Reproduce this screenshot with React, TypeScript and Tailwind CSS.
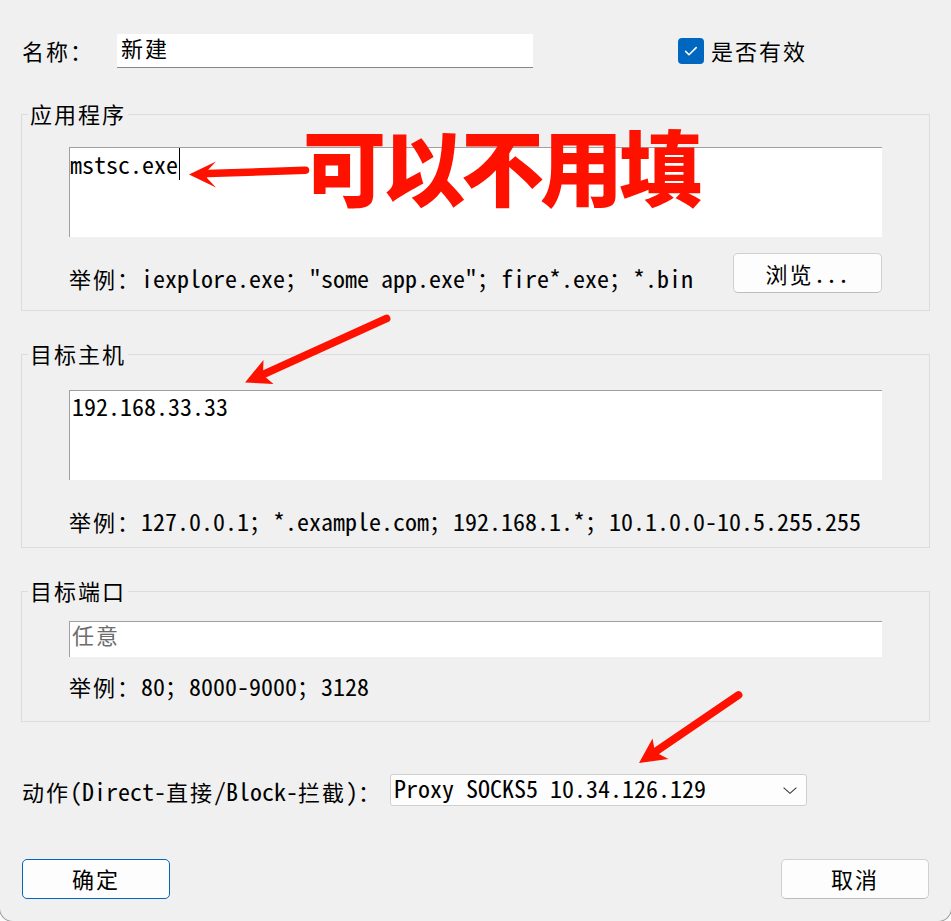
import React from "react";

function L({ children }: { children: React.ReactNode }) {
  return (
    <span className="[font-family:'Noto_Sans_Mono_CJK_SC','Liberation_Mono',monospace] text-[24px] tracking-normal">
      {children}
    </span>
  );
}

function Legend({ children }: { children: React.ReactNode }) {
  return (
    <legend className="ml-[6px] px-[2px] leading-[22px] h-[25px]">{children}</legend>
  );
}

export default function App() {
  return (
    <div className="relative w-[951px] h-[921px] overflow-hidden bg-[#fafafa] [font-family:'Noto_Sans_CJK_SC',sans-serif] text-[22px] tracking-[2px] leading-[24px] text-black">
      <div className="-ml-px w-[953px] h-[922px] pt-[34px] rounded-b-[14px] border-x border-b border-[#9e9e9e] bg-[#f0f0f0]">
        {/* name row */}
        <div className="flex items-center h-[34px] ml-[22px]">
          <div className="w-[95px] pb-[3px]">名称：</div>
          <div className="w-[416px] h-[34px] bg-white border-b border-[#868686] pl-[4px] pt-px">
            新建
          </div>
          <div className="ml-[145px] w-[26px] h-[26px] rounded-[4px] bg-[#0067c0] flex items-center justify-center">
            <svg width="26" height="26" viewBox="0 0 26 26">
              <path
                d="M7.6 13.4 L11 16.7 L18.2 9.6"
                stroke="white"
                strokeWidth="1.6"
                fill="none"
                strokeLinecap="round"
                strokeLinejoin="round"
              />
            </svg>
          </div>
          <div className="ml-[7px] pb-[3px]">是否有效</div>
        </div>

        {/* group 1 */}
        <fieldset className="mt-[34px] ml-[21px] w-[909px] h-[209px] border border-[#dcdcdc]">
          <Legend>应用程序</Legend>
          <div className="pl-[47px] pt-[20px]">
            <div className="w-[813px] h-[90px] bg-white border-t border-l border-[#a0a0a0] flex">
              <div className="pt-[4px] leading-[24px]">
                <L>mstsc.exe</L>
              </div>
              <div className="w-px h-[32px] bg-black ml-px" />
            </div>
            <div className="mt-[16px] w-[813px] flex justify-between items-start">
              <div className="pt-[13px] whitespace-nowrap">
                举例：<L>iexplore.exe</L>；<L>"some app.exe"</L>；<L>fire*.exe</L>；<L>*.bin</L>
              </div>
              <div className="w-[149px] h-[40px] bg-[#fdfdfd] border border-[#d0d0d0] border-b-[#bcbcbc] rounded-[5px] flex items-center justify-center">
                <span>
                  浏览<L>...</L>
                </span>
              </div>
            </div>
          </div>
        </fieldset>

        {/* group 2 */}
        <fieldset className="mt-[31px] ml-[21px] w-[909px] h-[206px] border border-[#dcdcdc]">
          <Legend>目标主机</Legend>
          <div className="pl-[47px] pt-[23px]">
            <div className="w-[813px] h-[90px] bg-white border-t border-l border-[#a0a0a0] pl-[2px] pt-[3px]">
              <L>192.168.33.33</L>
            </div>
            <div className="mt-[29px] whitespace-nowrap">
              举例：<L>127.0.0.1</L>；<L>*.example.com</L>；<L>192.168.1.*</L>；<L>10.1.0.0-10.5.255.255</L>
            </div>
          </div>
        </fieldset>

        {/* group 3 */}
        <fieldset className="mt-[31px] ml-[21px] w-[909px] h-[143px] border border-[#dcdcdc]">
          <Legend>目标端口</Legend>
          <div className="pl-[47px] pt-[17px]">
            <div className="w-[813px] h-[36px] bg-white border-t border-l border-[#a0a0a0] pl-[2px] text-[#6d6d6d]">
              任意
            </div>
            <div className="mt-[17px] whitespace-nowrap">
              举例：<L>80</L>；<L>8000-9000</L>；<L>3128</L>
            </div>
          </div>
        </fieldset>

        {/* action row */}
        <div className="mt-[52px] ml-[22px] flex items-center h-[32px]">
          <div className="w-[368px] whitespace-nowrap pt-[2px]">
            动作<L>(Direct-</L>直接<L>/Block-</L>拦截<L>)</L>：
          </div>
          <div className="w-[417px] h-[32px] bg-[#fdfdfd] border border-[#d0d0d0] rounded-[3px] flex items-center justify-between pl-[3px] pr-[9px]">
            <span className="pb-[4px]">
              <L>Proxy SOCKS5 10.34.126.129</L>
            </span>
            <svg width="14" height="7" viewBox="0 0 14 7">
              <path d="M0.6 0.6 L7 6.3 L13.4 0.6" stroke="#3a3a3a" strokeWidth="1.1" fill="none" />
            </svg>
          </div>
        </div>

        {/* buttons */}
        <div className="mt-[53px] ml-[22px] mr-[22px] flex justify-between">
          <div className="w-[148px] h-[40px] bg-[#fdfdfd] border border-[#0067c0] rounded-[5px] flex items-center justify-center pb-[3px]">
            确定
          </div>
          <div className="w-[148px] h-[40px] bg-[#fdfdfd] border border-[#d0d0d0] border-b-[#bcbcbc] rounded-[5px] flex items-center justify-center pb-[3px]">
            取消
          </div>
        </div>
      </div>

      {/* red annotations */}
      <svg
        className="absolute left-0 top-0 pointer-events-none"
        width="951"
        height="921"
        viewBox="0 0 951 921"
      >
        <path d="M208 173.6 L305.5 170.2" stroke="#ff1100" strokeWidth="7.5" strokeLinecap="round" />
        <path d="M189 174.5 L216 161.5 L207 171 L207 178 L216 187.5 Z" fill="#ff1100" />

        <path d="M386.5 318.5 L262 375" stroke="#ff1100" strokeWidth="7.8" strokeLinecap="round" />
        <path d="M245 382.5 L263.5 360 L263 375 L273.5 384 Z" fill="#ff1100" />

        <path d="M738.5 695 L655 752" stroke="#ff1100" strokeWidth="7.8" strokeLinecap="round" />
        <path d="M639 763 L652.5 738.5 L655 752 L668.5 759 Z" fill="#ff1100" />
      </svg>
      <div className="absolute left-[303px] top-[123px] text-[83px] leading-[83px] font-black tracking-[-4px] text-[#ff1100] whitespace-nowrap pointer-events-none">
        可以不用填
      </div>
    </div>
  );
}
